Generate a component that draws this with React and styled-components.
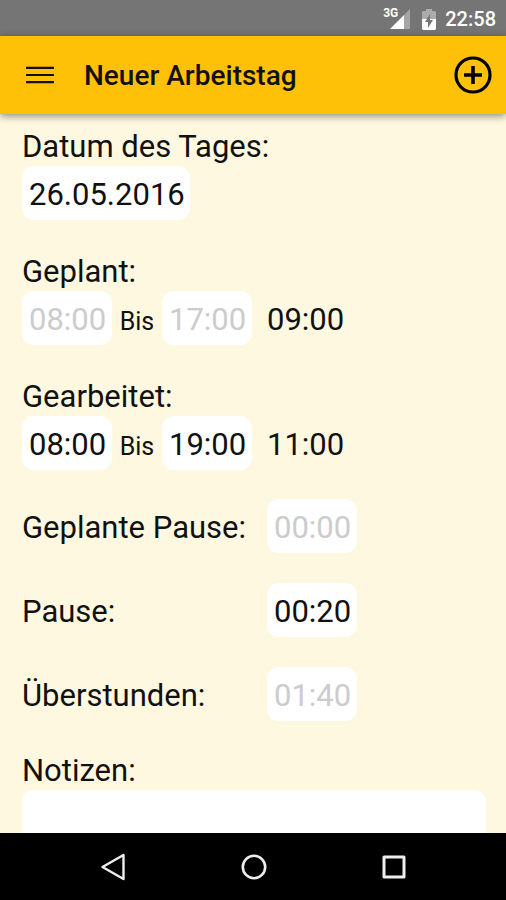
import React from 'react';
import styled, { createGlobalStyle } from 'styled-components';

const COLORS = {
  status: '#757575',
  primary: '#ffc107',
  background: '#fff8e1',
  field: '#ffffff',
  text: '#111111',
  disabled: '#cccccc',
  navigation: '#000000'
};

const GlobalStyle = createGlobalStyle`
  *, *::before, *::after {
    box-sizing: border-box;
  }

  body {
    margin: 0;
    background: ${COLORS.background};
    color: ${COLORS.text};
    font-family: Roboto, "Liberation Sans", sans-serif;
  }
`;

const Screen = styled.div`
  display: flex;
  flex-direction: column;
  height: 100vh;
`;

const StatusBar = styled.div`
  flex: none;
  display: flex;
  align-items: center;
  justify-content: flex-end;
  height: 36px;
  padding: 2px 10px 0;
  background: ${COLORS.status};
  color: #fff;
`;

const Network = styled.span`
  align-self: flex-start;
  margin: 4px -8px 0 0;
  font-size: 12px;
  font-weight: 700;
  line-height: 14px;
`;

const StatusIcon = styled.svg`
  flex: none;
  margin-right: ${({ $gap }) => $gap}px;
`;

const Clock = styled.time`
  font-size: 20px;
  font-weight: 500;
`;

const AppBar = styled.header`
  position: relative;
  flex: none;
  display: flex;
  align-items: center;
  height: 78px;
  padding: 0 13px 0 20px;
  background: ${COLORS.primary};
  box-shadow: 0 2px 8px rgba(0, 0, 0, 0.45);
`;

const IconButton = styled.button`
  display: flex;
  align-items: center;
  justify-content: center;
  width: 40px;
  height: 40px;
  padding: 0;
  border: 0;
  background: none;
  color: inherit;
  cursor: pointer;
`;

const Title = styled.h1`
  flex: 1;
  margin: 0 0 0 24px;
  padding-top: 2px;
  font-size: 28px;
  font-weight: 500;
  line-height: 32px;
`;

const Form = styled.form`
  flex: 1;
  min-height: 0;
  overflow: hidden;
  padding: 15px 20px 0 22px;
`;

const Group = styled.div`
  margin-bottom: 34px;
`;

const Label = styled.label`
  display: block;
  font-size: 31px;
  line-height: 36px;
`;

const Caption = styled(Label).attrs({ as: 'div' })`
  margin-bottom: 1px;
`;

const FieldLabel = styled(Label)`
  margin-bottom: 1px;
`;

const Field = styled.input`
  display: block;
  width: ${({ $wide }) => ($wide ? '168px' : '90px')};
  height: 54px;
  padding: 2px 0 0 7px;
  border: 0;
  border-radius: 12px;
  background: ${COLORS.field};
  color: ${COLORS.text};
  font: 31px Roboto, "Liberation Sans", sans-serif;

  &:disabled {
    color: ${COLORS.disabled};
  }
`;

const Range = styled.div`
  display: grid;
  grid-template-columns: 90px 50px 90px auto;
  align-items: baseline;
`;

const Until = styled.span`
  font-size: 25px;
  text-align: center;
`;

const Total = styled.output`
  margin-left: 15px;
  font-size: 31px;
  line-height: 36px;
`;

const Rows = styled.div`
  display: grid;
  gap: 30px;
  margin: -5px 0 32px;
`;

const Row = styled.div`
  display: grid;
  grid-template-columns: 245px auto;
  align-items: baseline;
`;

const Notes = styled.textarea`
  display: block;
  width: 100%;
  height: 160px;
  padding: 8px;
  border: 0;
  border-radius: 12px;
  background: ${COLORS.field};
  font: 31px Roboto, "Liberation Sans", sans-serif;
  resize: none;
`;

const NavigationBar = styled.nav`
  position: relative;
  flex: none;
  display: flex;
  align-items: center;
  justify-content: center;
  gap: 100px;
  height: 67px;
  padding-left: 2px;
  background: ${COLORS.navigation};
  color: #eee;
`;

const TimeRange = ({ id, title, from, to, total, disabled }) => (
  <Group role="group" aria-labelledby={id}>
    <Caption id={id}>{title}</Caption>
    <Range>
      <Field aria-labelledby={id} defaultValue={from} disabled={disabled} />
      <Until id={`${id}-until`}>Bis</Until>
      <Field aria-labelledby={`${id} ${id}-until`} defaultValue={to} disabled={disabled} />
      <Total>{total}</Total>
    </Range>
  </Group>
);

const TimeRow = ({ id, title, value, disabled }) => (
  <Row>
    <Label htmlFor={id}>{title}</Label>
    <Field id={id} defaultValue={value} disabled={disabled} />
  </Row>
);

const App = () => (
  <Screen>
    <GlobalStyle />
    <StatusBar>
      <Network>3G</Network>
      <StatusIcon $gap={12} width="20" height="20" viewBox="0 0 20 20" aria-hidden>
        <path d="M20 0v20h-6V6z" fill="#fff" opacity="0.35" />
        <path d="M14 6v14H0z" fill="#fff" />
      </StatusIcon>
      <StatusIcon $gap={9} width="14" height="21" viewBox="0 0 14 21" aria-hidden>
        <path d="M4 0h6v2h3l1 1v7H0V3l1-1h3z" fill="#fff" opacity="0.4" />
        <path d="M0 10h14v10l-1 1H1l-1-1z" fill="#fff" />
        <path d="M8 5v6h3l-5 8v-6H3z" fill={COLORS.status} />
      </StatusIcon>
      <Clock>22:58</Clock>
    </StatusBar>

    <AppBar>
      <IconButton type="button" aria-label="Menü">
        <svg width="28" height="18" viewBox="0 0 28 18" stroke="currentColor" strokeWidth="2.2">
          <path d="M0 1.800h28M0 9h28M0 16.200h28" />
        </svg>
      </IconButton>
      <Title>Neuer Arbeitstag</Title>
      <IconButton type="button" aria-label="Hinzufügen">
        <svg width="38" height="38" viewBox="0 0 38 38" fill="none" stroke="#000" strokeWidth="3.2">
          <circle cx="19" cy="19" r="17" />
          <path d="M19 10v18M10 19h18" strokeWidth="3.6" />
        </svg>
      </IconButton>
    </AppBar>

    <Form>
      <Group>
        <FieldLabel htmlFor="date">Datum des Tages:</FieldLabel>
        <Field id="date" $wide defaultValue="26.05.2016" />
      </Group>
      <TimeRange id="planned" title="Geplant:" from="08:00" to="17:00" total="09:00" disabled />
      <TimeRange id="worked" title="Gearbeitet:" from="08:00" to="19:00" total="11:00" />
      <Rows>
        <TimeRow id="planned-break" title="Geplante Pause:" value="00:00" disabled />
        <TimeRow id="break" title="Pause:" value="00:20" />
        <TimeRow id="overtime" title="Überstunden:" value="01:40" disabled />
      </Rows>
      <FieldLabel htmlFor="notes">Notizen:</FieldLabel>
      <Notes id="notes" />
    </Form>

    <NavigationBar>
      <IconButton type="button" aria-label="Zurück">
        <svg width="28" height="28" viewBox="0 0 28 28" fill="none" stroke="currentColor" strokeWidth="2.4" strokeLinejoin="round">
          <path d="M23.500 2v24L2.500 14z" />
        </svg>
      </IconButton>
      <IconButton type="button" aria-label="Startseite">
        <svg width="28" height="28" viewBox="0 0 28 28" fill="none" stroke="currentColor" strokeWidth="2.6">
          <circle cx="14" cy="14" r="11.200" />
        </svg>
      </IconButton>
      <IconButton type="button" aria-label="Übersicht">
        <svg width="28" height="28" viewBox="0 0 28 28" fill="none" stroke="currentColor" strokeWidth="3" strokeLinejoin="round">
          <rect x="4" y="4" width="20" height="20" />
        </svg>
      </IconButton>
    </NavigationBar>
  </Screen>
);

export default App;
